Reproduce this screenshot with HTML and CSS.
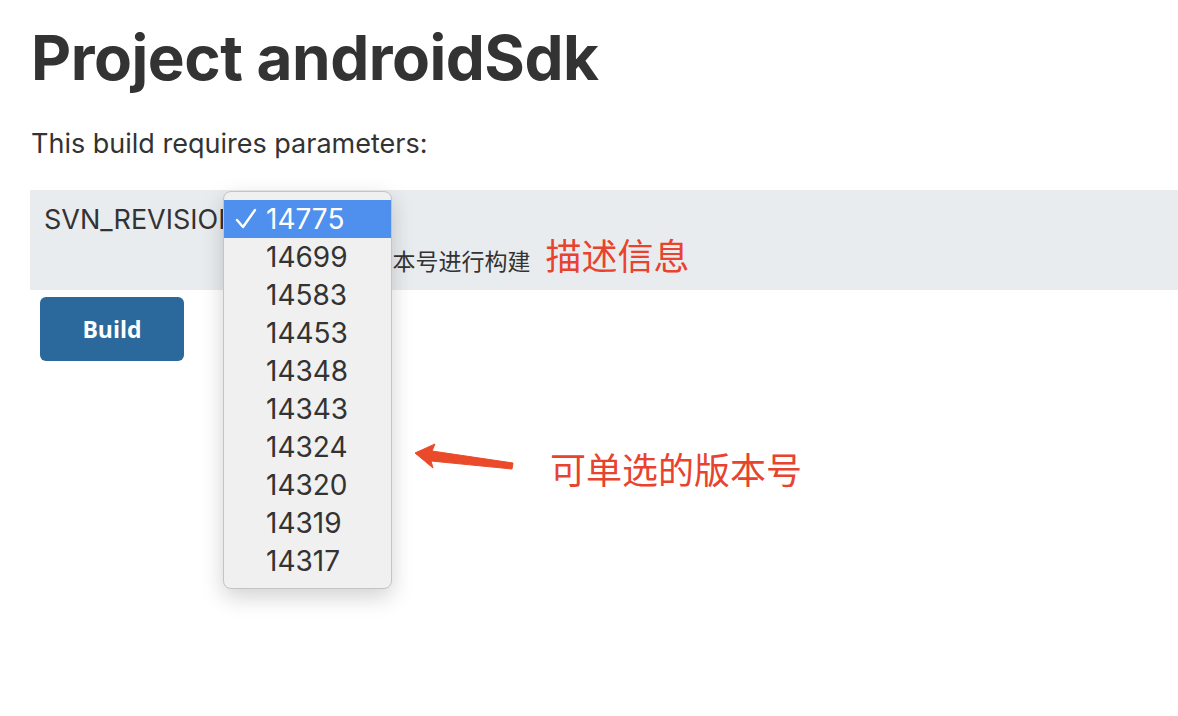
FILE: index.html
```html
<!DOCTYPE html>
<html lang="zh-CN">
<head>
<meta charset="utf-8">
<title>Project androidSdk</title>
<link rel="stylesheet" href="styles.css">
</head>
<body>
<main class="page">
  <h1 class="title">Project androidSdk</h1>
  <p class="intro">This build requires parameters:</p>
  <div class="params">
    <div class="param-name">SVN_REVISION</div>
    <div class="param-setting">
      <div class="select-slot"></div>
      <div class="desc-line">
        <span class="desc">请选择SVN的版本号进行构建</span>
        <span class="note">描述信息</span>
      </div>
      <ul class="dropdown">
        <li class="opt selected"><span class="check"><svg width="22" height="22" viewBox="0 0 22 22"><path d="M2 12 L8 19 L20 2" fill="none" stroke="#ffffff" stroke-width="2.4" stroke-linecap="round" stroke-linejoin="round"/></svg></span>14775</li>
        <li class="opt"><span class="check"></span>14699</li>
        <li class="opt"><span class="check"></span>14583</li>
        <li class="opt"><span class="check"></span>14453</li>
        <li class="opt"><span class="check"></span>14348</li>
        <li class="opt"><span class="check"></span>14343</li>
        <li class="opt"><span class="check"></span>14324</li>
        <li class="opt"><span class="check"></span>14320</li>
        <li class="opt"><span class="check"></span>14319</li>
        <li class="opt"><span class="check"></span>14317</li>
      </ul>
    </div>
  </div>
  <div class="actions">
    <button class="build-btn">Build</button>
  </div>
  <div class="callout">
    <svg class="arrow" width="110" height="40" viewBox="0 0 110 40">
      <polygon points="5,13 25,4 22,11 103,23 102,29 21,21 23,28" fill="#ea4a2a" stroke="#ea4a2a" stroke-width="1" stroke-linejoin="round"/>
    </svg>
    <span class="callout-text">可单选的版本号</span>
  </div>
</main>
</body>
</html>
```
FILE: styles.css
```css
html, body {
  margin: 0;
  padding: 0;
  background: #ffffff;
}
.page {
  position: relative;
  min-height: 716px;
  box-sizing: border-box;
  padding: 18px 0 0 30px;
  font-family: Inter, "Noto Sans", "Noto Sans CJK SC", sans-serif;
  color: #333333;
}
.title {
  margin: 0 0 0 1px;
  font-size: 62px;
  font-weight: 700;
  line-height: 80px;
  letter-spacing: -0.5px;
  color: #333333;
}
.intro {
  margin: 29px 0 0 1px;
  font-size: 27px;
  line-height: 34px;
  color: #333333;
}
.params {
  margin-top: 29px;
  height: 100px;
  background: #e9ecef;
  display: flex;
}
.param-name {
  width: 180px;
  padding: 13px 0 0 14px;
  font-size: 27px;
  line-height: 34px;
  color: #333333;
  white-space: nowrap;
}
.param-setting {
  position: relative;
  flex: 1;
  padding-top: 10px;
}
.select-slot {
  height: 36px;
}
.desc-line {
  display: flex;
  align-items: baseline;
  padding-left: 10px;
  margin-top: -2px;
}
.desc {
  font-family: "Noto Sans CJK SC", sans-serif;
  font-size: 23px;
  color: #333333;
}
.note {
  margin-left: 15px;
  font-family: "Noto Sans CJK SC", sans-serif;
  font-size: 36px;
  line-height: 40px;
  color: #e8432e;
}
.dropdown {
  position: absolute;
  left: -1px;
  top: 1px;
  width: 167px;
  margin: 0;
  padding: 8px 0;
  list-style: none;
  background: #f0f0f0;
  border: 1px solid #c4c4c4;
  border-radius: 8px;
  box-shadow: 0 8px 22px rgba(0, 0, 0, 0.18);
  z-index: 2;
}
.opt {
  display: flex;
  align-items: center;
  height: 38px;
  font-size: 28px;
  color: #333333;
}
.check {
  width: 42px;
  padding-left: 11px;
  box-sizing: border-box;
  display: flex;
  align-items: center;
}
.check svg {
  display: block;
}
.opt.selected {
  background: #4f8fee;
  color: #ffffff;
}
.actions {
  padding: 7px 0 0 10px;
}
.build-btn {
  width: 144px;
  height: 64px;
  border: none;
  border-radius: 6px;
  background: #2b699c;
  color: #ffffff;
  font-family: "Open Sans", Inter, sans-serif;
  font-size: 23px;
  font-weight: 700;
}
.callout {
  position: absolute;
  left: 410px;
  top: 440px;
  display: flex;
  align-items: flex-start;
}
.arrow {
  display: block;
}
.callout-text {
  margin: 2px 0 0 30px;
  font-family: "Noto Sans CJK SC", sans-serif;
  font-size: 36px;
  line-height: 52px;
  color: #e8432e;
}
```
